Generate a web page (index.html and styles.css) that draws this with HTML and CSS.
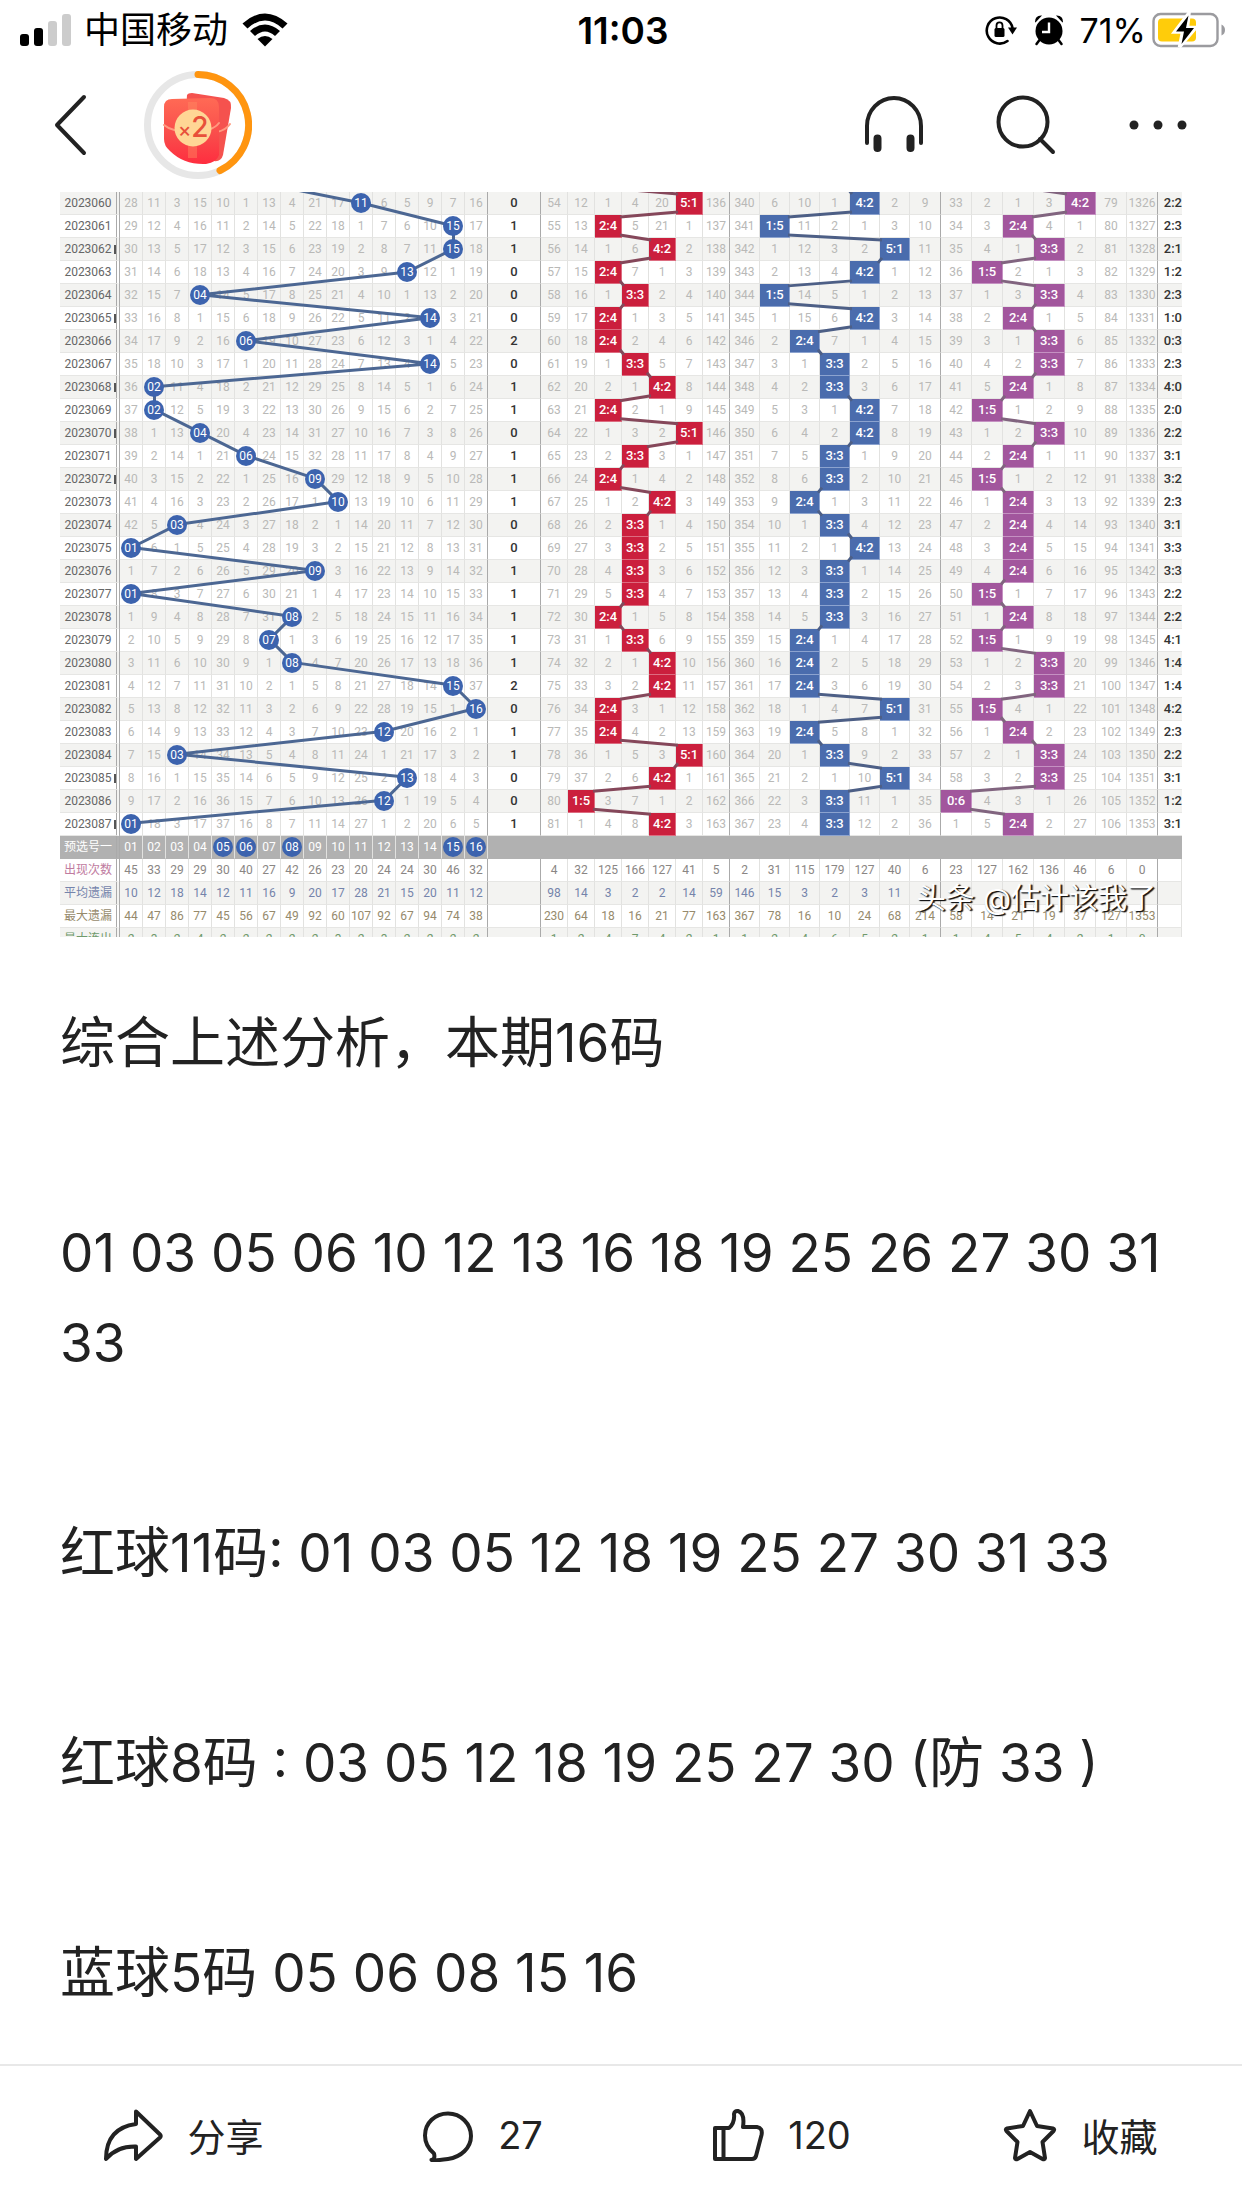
FILE: index.html
```
<!DOCTYPE html>
<html lang="zh-CN">
<head>
<meta charset="utf-8">
<meta name="viewport" content="width=device-width">
<title>本期分析</title>
<link rel="stylesheet" href="styles.css">
</head>
<body>
<div class="status">
  <div class="status-left">
    <svg width="52" height="34" viewBox="0 0 52 34" aria-hidden="true">
      <rect x="0" y="21" width="9" height="12" rx="3"/><rect x="14" y="15" width="9" height="18" rx="3"/>
      <rect class="faint" x="28" y="8" width="9" height="25" rx="3"/><rect class="faint" x="42" y="1" width="9" height="32" rx="3"/>
    </svg>
    <span class="carrier">中国移动</span>
    <svg width="46" height="34" viewBox="0 0 46 34" aria-hidden="true">
      <path d="M0.500 10.500Q23-9.500 45.500 10.500L40.500 15.500Q23-.5 5.500 15.500Z"/>
      <path d="M8 18Q23 5 38 18L33 23Q23 14 13 23Z"/>
      <path d="M15.500 26Q23 20 30.500 26L23 33.500Z"/>
    </svg>
  </div>
  <div class="time">11:03</div>
  <div class="status-right">
    <svg width="33" height="32" viewBox="0 0 33 32" aria-hidden="true">
      <path d="M22.500 27A13 13 0 1 1 27.500 14" fill="none" stroke="#000" stroke-width="2.600" stroke-linecap="round"/>
      <path d="M23 13.500H32L27.500 20.500Z"/><rect x="9.500" y="14" width="10" height="9" rx="1.500"/>
      <path d="M11.500 15V11.500a3 3.200 0 0 1 6 0V15" fill="none" stroke="#000" stroke-width="1.800"/>
    </svg>
    <svg width="30" height="32" viewBox="0 0 30 32" aria-hidden="true">
      <circle cx="15" cy="17" r="13.500"/><path d="M1 8Q1 1 8 1.500L1.500 8.500ZM29 8Q29 1 22 1.500L28.500 8.500Z"/>
      <path d="M5.500 26 2.500 30M24.500 26l3 4" stroke="#000" stroke-width="2.500" stroke-linecap="round"/>
      <path d="M15 8.500V18H8" fill="none" stroke="#fff" stroke-width="2.400"/>
    </svg>
    <span class="percent">71%</span>
    <svg class="battery" width="74" height="36" viewBox="0 0 74 36" aria-hidden="true">
      <rect x="1.500" y="2" width="64" height="32" rx="7" fill="none" stroke="#9b9b9f" stroke-width="2.400"/>
      <rect x="6" y="6.500" width="38" height="23" rx="4" fill="#ffcc0a"/>
      <path d="M69.500 12.500Q73 14 73 18T69.500 23.500Z" fill="#9b9b9f"/>
      <path d="M37 1 22.500 20H30.500L27.500 35 44 15.500H35.500Z" stroke="#fff" stroke-width="3.500" fill="#fff"/>
      <path d="M36.500 3.500 24 19.500H32L29.500 32 42 16H34Z"/>
    </svg>
  </div>
</div>

<header class="bar">
  <button class="icon" aria-label="返回">
    <svg width="34" height="62" viewBox="0 0 34 62"><path d="M30 3 3 31 30 59"/></svg>
  </button>
  <button class="icon" aria-label="红包">
    <svg class="packet" width="108" height="108" viewBox="0 0 108 108">
      <defs><linearGradient id="p" x1="0" y1="0" x2="0" y2="1"><stop offset="0" stop-color="#ff6a55"/><stop offset=".6" stop-color="#f94a4a"/><stop offset="1" stop-color="#ff2d3f"/></linearGradient></defs>
      <circle cx="54" cy="54" r="50.500" fill="none" stroke="#e7e7e7" stroke-width="7"/>
      <path d="M54 3.500A50.500 50.500 0 0 1 76 99.500" fill="none" stroke="#ff950f" stroke-width="7" stroke-linecap="round"/>
      <path d="M43 24Q44 22 48 22L80 27Q88 29 87 37L79 84Q77 91 70 90L40 80Z" fill="#f5524e"/>
      <path d="M73 61Q82 59 86 53" fill="none" stroke="#ff9a80" stroke-width="2"/>
      <path d="M20 36Q20 28 28 28L66 27Q75 27 75 36V84Q73 91 62 93Q40 94 26 80Q20 75 20 68Z" fill="url(#p)"/>
      <path d="M20 54Q28 61 48 61T75 52" fill="none" stroke="#ff9a80" stroke-width="2"/>
      <path d="M44 31h9v56h-9z" fill="#ff8a62" opacity=".45"/>
      <circle cx="49" cy="57" r="18.500" fill="#ffd695"/>
      <text x="34" y="66" class="times">×<tspan class="two">2</tspan></text>
    </svg>
  </button>
  <span class="grow"></span>
  <button class="icon" aria-label="听全文">
    <svg width="60" height="60" viewBox="0 0 60 60"><path d="M3 48V31a27 28 0 0 1 54 0V48"/><path d="M13.500 43.500V53M46.500 43.500V53" stroke-width="8"/></svg>
  </button>
  <button class="icon" aria-label="搜索">
    <svg width="60" height="60" viewBox="0 0 60 60"><circle cx="27" cy="27" r="24.500"/><path d="M44 44 57 57"/></svg>
  </button>
  <button class="icon" aria-label="更多">
    <svg width="60" height="60" viewBox="0 0 60 60"><g class="dots"><circle cx="6" cy="30" r="4.500"/><circle cx="30" cy="30" r="4.500"/><circle cx="54" cy="30" r="4.500"/></g></svg>
  </button>
</header>

<main>
  <figure class="chart">
    <table id="trend"></table>
    <svg id="lines" class="lines" viewBox="0 0 1122 746" preserveAspectRatio="none" aria-hidden="true"></svg>
    <figcaption>头条 @估计该我了</figcaption>
  </figure>
  <article>
    <p>综合上述分析，本期<span class="num">16</span>码</p>
    <p><span class="num">01 03 05 06 10 12 13 16 18 19 25 26 27 30 31 33</span></p>
    <p>红球<span class="num">11</span>码<span class="num">: 01 03 05 12 18 19 25 27 30 31 33</span></p>
    <p>红球<span class="num">8</span>码<span class="num"> : 03 05 12 18 19 25 27 30 (</span>防<span class="num"> 33 )</span></p>
    <p>蓝球<span class="num">5</span>码<span class="num"> 05 06 08 15 16</span></p>
  </article>
</main>

<footer>
  <button><svg width="60" height="54" viewBox="0 0 60 54"><path d="M33 3.500 57 26.500Q58.500 28 57 29.500L33 51V38.500Q14 38 3 51Q3 20 33 16Z"/></svg><span>分享</span></button>
  <button><svg width="52" height="54" viewBox="0 0 52 54"><path d="M26 5.500C13 5.500 3 15 3 27.500Q3 38 12 45.500Q13.500 51 9.500 52Q12 53 26 51C39 49 49 40 49 28S39 5.500 26 5.500Z"/></svg><span>27</span></button>
  <button><svg width="52" height="54" viewBox="0 0 52 54"><path d="M3 20H17Q23 15 22 6Q22.500 2.500 26 3Q33 5 31 19H45Q51 20 49.500 27L44 48Q43 51 40 51H3ZM11.500 20V51"/></svg><span>120</span></button>
  <button><svg width="54" height="54" viewBox="0 0 54 54"><path d="M27 3 34 18 50 20.500Q52 21 50.500 23L39.500 34 42 50Q41.500 52 39.500 51L27 44 14.500 51Q12.500 52 12 50L14.500 34 3.500 23Q2 21 4 20.500L20 18Z"/></svg><span>收藏</span></button>
</footer>
<script src="chart.js"></script>
</body>
</html>
```
FILE: styles.css
```
* { box-sizing: border-box; }
body {
  margin: 0;
  min-height: 100vh;
  display: flex;
  flex-direction: column;
  background: #fff;
  color: #222;
  font-family: Inter, "Noto Sans CJK SC", sans-serif;
}
button { border: 0; padding: 0; background: none; color: inherit; font: inherit; }
svg { display: block; flex: none; }

.status {
  display: grid;
  grid-template-columns: 1fr auto 1fr;
  align-items: center;
  height: 60px;
  padding: 0 16px 0 20px;
  color: #000;
  font-size: 34px;
}
.status-left, .status-right { display: flex; align-items: center; }
.status-right { justify-content: flex-end; gap: 16px; }
.carrier { margin: 0 14px 0 12px; font-size: 36px; line-height: 60px; }
.time { font-size: 37px; font-weight: 600; }
.faint { fill: #ccc; }
.battery { margin-left: -10px; }

.bar { display: flex; align-items: center; height: 132px; padding: 0 54px 2px; gap: 72px; }
.bar .icon:first-child { margin-right: -16px; }
.grow { flex: 1; }
.icon svg { fill: none; stroke: #222; stroke-width: 4; stroke-linecap: round; stroke-linejoin: round; }
.icon .packet { stroke: none; }
.icon .dots { fill: #222; stroke: none; }
.times { fill: #e8503a; font: 500 20px Inter, sans-serif; }
.two { font-size: 28px; }

main { flex: 1; padding: 0 60px; }
.chart { position: relative; margin: 0; height: 745px; overflow: hidden; }
table {
  width: 100%;
  table-layout: fixed;
  border-spacing: 0;
  font: 12px/22px Roboto, "Noto Sans CJK SC", sans-serif;
  text-align: center;
}
td, th {
  height: 23px;
  padding: 0;
  border-right: 1px solid #e2e2e0;
  border-bottom: 1px solid #e6e6e4;
  color: #b9b9b7;
  font-weight: 400;
  white-space: nowrap;
}
tr:nth-child(odd) { background: #f3f3f1; }
th { position: relative; color: #666; border-right: 4px double #aaa; }
.mark::after {
  content: "";
  position: absolute;
  top: 7px;
  right: 0;
  width: 2px;
  height: 9px;
  background: #555;
}
.edge { border-right-color: #aaa; }
.sum, .ratio { color: #333; font-size: 13px; font-weight: 500; }
.ratio { border-right: 0; text-align: right; }
.hit { color: #fff; font-size: 13px; font-weight: 500; }
.red { background: #cb1f3d; border-color: #dd6c80; }
.blue { background: #4a6cad; border-color: #8ca3cf; }
.purple { background: #a2569d; border-color: #c591c2; }
.ball {
  position: relative;
  z-index: 1;
  display: block;
  width: 20px;
  margin: 0 auto;
  border-radius: 50%;
  background: #3c63ae;
  color: #fff;
  line-height: 20px;
}
table .pick { background: #b1b1b1; }
.pick td, .pick th { color: #fff; border-bottom-color: #b1b1b1; }
.pick .plain { border-right-color: #b1b1b1; }
.stat td { color: #8a8684; }
.count th { color: #c07ba0; }
.mean th, .mean td { color: #7584ab; }
.max th, .max td { color: #968a6c; }
.run th, .run td { color: #6f9a6c; }
.lines { position: absolute; inset: 0; width: 100%; height: 100%; fill: none; stroke-width: 3; }
.lines .path { stroke: #4c6793; }
.lines .red-step { stroke: #85475a; }
.lines .blue-step { stroke: #4d5f86; }
.lines .purple-step { stroke: #81647f; }
figcaption {
  position: absolute;
  right: 26px;
  bottom: 18px;
  color: #fff;
  font-size: 29px;
  line-height: 40px;
  text-shadow: 1px 1px 1px #111, 2px 1px 1px #333;
}

article { padding: 60px 0 40px; font-size: 55px; line-height: 90px; }
.num { font-size: 53px; line-height: 1; }
p { margin: 0 0 120px; }
p:last-child { margin: 0; }

footer {
  position: sticky;
  bottom: 0;
  display: flex;
  height: 144px;
  padding: 0 12px 5px 34px;
  border-top: 2px solid #e8e8e8;
  background: #fff;
  font-size: 38px;
}
footer button { flex: 1; display: flex; align-items: center; justify-content: center; gap: 24px; }
footer svg { fill: none; stroke: #222; stroke-width: 4; stroke-linejoin: round; }
```
FILE: chart.js
```
// Trend table: each cell counts the draws since its column last hit.
const ROW = 23;
const labels = ['0:6', '1:5', '2:4', '3:3', '4:2', '5:1', '6:0'];
const groups = [
  { kind: 'ball', left: 60, width: 23, before: 5,
    miss: [28, 11, 3, 15, 10, 1, 13, 4, 21, 17, 0, 6, 5, 9, 7, 16],
    hits: [10, 14, 14, 12, 3, 13, 5, 13, 1, 1, 3, 5, 8, 9, 2, 0, 8, 0, 7, 6, 7, 14, 15, 11, 2, 12, 11, 0] },
  { kind: 'red', left: 481, width: 27, before: 2,
    miss: [54, 12, 1, 4, 20, 0, 136],
    hits: [5, 2, 4, 2, 3, 2, 2, 3, 4, 2, 5, 3, 2, 4, 3, 3, 3, 3, 2, 3, 4, 4, 2, 2, 5, 4, 1, 4] },
  { kind: 'blue', left: 670, width: 30, before: 3,
    miss: [340, 6, 10, 1, 0, 2, 9],
    hits: [4, 1, 5, 4, 1, 4, 2, 3, 3, 4, 4, 3, 3, 2, 3, 4, 3, 3, 3, 2, 2, 2, 5, 2, 3, 5, 3, 3] },
  { kind: 'purple', left: 881, width: 31, before: 2,
    miss: [33, 2, 1, 3, 0, 79, 1326],
    hits: [4, 2, 3, 1, 3, 2, 3, 3, 2, 1, 3, 2, 1, 2, 2, 2, 2, 1, 2, 1, 3, 3, 1, 2, 3, 3, 0, 2] }
];
const sums = '0110002011011100111112011001'.split('');
const ratios = '2:2 2:3 2:1 1:2 2:3 1:0 0:3 2:3 4:0 2:0 2:2 3:1 3:2 2:3 3:1 3:3 3:3 2:2 2:2 4:1 1:4 1:4 4:2 2:3 2:2 3:1 1:2 3:1'.split(' ');
const marks = [62, 65, 68, 70, 72, 85, 87];
const stats = [
  ['count', '出现次数', '45 33 29 29 30 40 27 42 26 23 20 24 24 30 46 32', '4 32 125 166 127 41 5', '2 31 115 179 127 40 6', '23 127 162 136 46 6 0'],
  ['mean', '平均遗漏', '10 12 18 14 12 11 16 9 20 17 28 21 15 20 11 12', '98 14 3 2 2 14 59', '146 15 3 2 3 11', ''],
  ['max', '最大遗漏', '44 47 86 77 45 56 67 49 92 60 107 92 67 94 74 38', '230 64 18 16 21 77 163', '367 78 16 10 24 68 214', '58 14 21 19 37 127 1353'],
  ['run', '最大连出', '2 3 2 4 2 2 2 2 2 3 2 3 2 2 2 2', '1 2 4 7 4 2 1', '1 2 4 6 5 2 1', '1 4 5 4 2 1 0']
];

const widths = [60].concat(Array(16).fill(23), 53, Array(7).fill(27), Array(6).fill(30), 31, Array(7).fill(31), 24);
const cell = (text, cls) => `<td class="${cls}">${text}</td>`;
const edge = (i, n) => (i === n - 1 ? 'edge' : '');

let html = '<colgroup>' + widths.map(w => `<col width="${w}">`).join('') + '</colgroup><tbody>';
const miss = groups.map(g => g.miss.slice());

sums.forEach((sum, r) => {
  const issue = 60 + r;
  html += `<tr><th scope="row" class="${marks.includes(issue) ? 'mark' : ''}">20230${issue}</th>`;
  groups.forEach((g, k) => {
    miss[k].forEach((value, i) => {
      if (r > 0) miss[k][i] = value + 1;
      if (i === g.hits[r]) {
        miss[k][i] = 0;
        html += g.kind === 'ball'
          ? cell(`<span class="ball">${String(i + 1).padStart(2, '0')}</span>`, edge(i, 16))
          : cell(labels[i], 'hit ' + g.kind);
      } else {
        html += cell(miss[k][i], edge(i, miss[k].length));
      }
    });
    if (k === 0) html += cell(sum, 'sum edge');
  });
  html += cell(ratios[r], 'ratio') + '</tr>';
});

html += '<tr class="pick"><th scope="row">预选号一</th>';
for (let n = 1; n <= 16; n++) {
  const text = String(n).padStart(2, '0');
  html += cell([5, 6, 8, 15, 16].includes(n) ? `<span class="ball">${text}</span>` : text, '');
}
html += cell('', 'plain').repeat(23) + '</tr>';

stats.forEach(([cls, name, ...parts]) => {
  html += `<tr class="stat ${cls}"><th scope="row">${name}</th>`;
  parts.forEach((part, k) => {
    const n = k ? 7 : 16;
    const values = part.split(' ');
    for (let i = 0; i < n; i++) html += cell(values[i] || '', edge(i, n));
    if (k === 0) html += cell('', 'edge');
  });
  html += cell('', '') + '</tr>';
});
document.getElementById('trend').innerHTML = html + '</tbody>';

// Balls are joined centre to centre, blocks corner to corner.
let lines = '';
groups.forEach(g => {
  let prev = g.before;
  let d = '';
  g.hits.forEach((hit, r) => {
    const y = r * ROW;
    if (g.kind === 'ball') {
      const x = i => g.left + (i + 0.5) * g.width;
      d += `M${x(prev)} ${y - 12}L${x(hit)} ${y + 11}`;
    } else if (hit !== prev) {
      const back = hit < prev;
      const from = g.left + (back ? prev : prev + 1) * g.width;
      const to = g.left + (back ? hit + 1 : hit) * g.width;
      d += `M${from + (back ? 2 : -2)} ${y - 3}L${to + (back ? -2 : 2)} ${y + 2}`;
    }
    prev = hit;
  });
  lines += `<path class="${g.kind === 'ball' ? 'path' : g.kind + '-step'}" d="${d}"/>`;
});
document.getElementById('lines').innerHTML = lines;
```
